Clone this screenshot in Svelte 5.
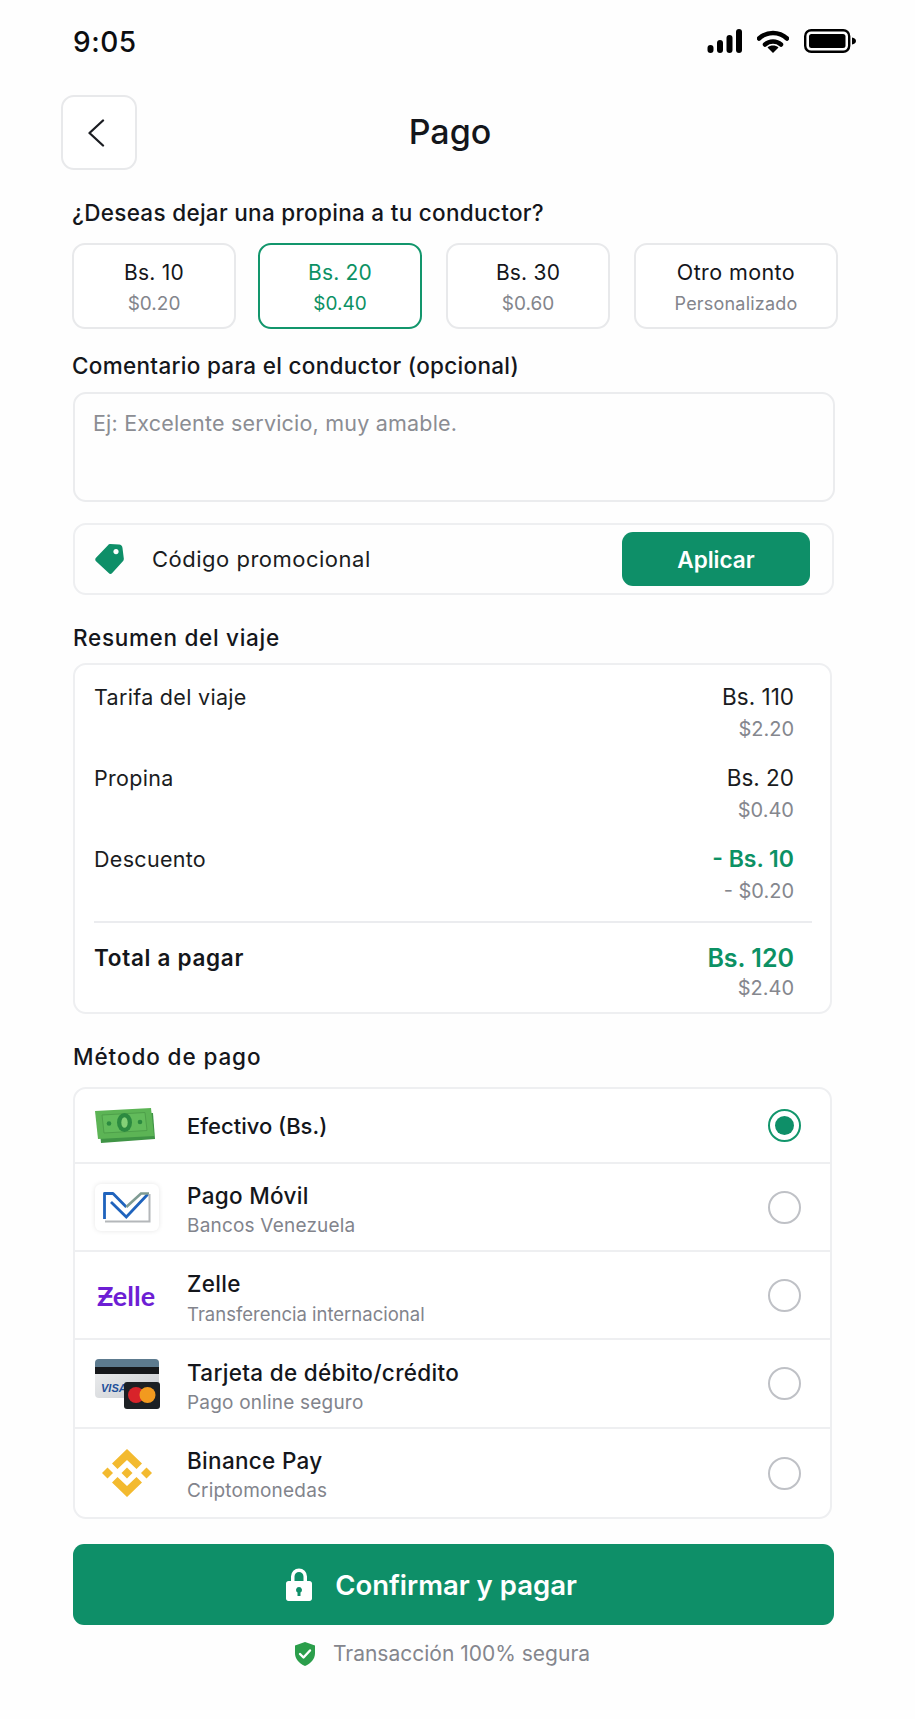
<script>
  const tips = [
    { main: 'Bs. 10', sub: '$0.20' },
    { main: 'Bs. 20', sub: '$0.40', active: true },
    { main: 'Bs. 30', sub: '$0.60' },
    { main: 'Otro monto', sub: 'Personalizado' }
  ];
  const summary = [
    { label: 'Tarifa del viaje', main: 'Bs. 110', sub: '$2.20' },
    { label: 'Propina', main: 'Bs. 20', sub: '$0.40' },
    { label: 'Descuento', main: '- Bs. 10', sub: '- $0.20', green: true }
  ];
</script>

<div class="page">
  <div class="status">
    <span class="time">9:05</span>
    <div class="status-icons">
      <svg width="35" height="24" viewBox="0 0 35 24"><rect x="0.5" y="16" width="6" height="8" rx="3"/><rect x="10" y="11" width="6" height="13" rx="3"/><rect x="19.500" y="6" width="6" height="18" rx="3"/><rect x="29" y="0" width="6" height="24" rx="3"/></svg>
      <svg width="32" height="23" viewBox="0 0 32 23"><path d="M2 8.500C10 1 22 1 30 8.500" fill="none" stroke="#000" stroke-width="4.500" stroke-linecap="round"/><path d="M8 14.500C12.500 10.500 19.500 10.500 24 14.500" fill="none" stroke="#000" stroke-width="4.500" stroke-linecap="round"/><path d="M16 23l-5.500-5.500c3-2.600 8-2.600 11 0z"/></svg>
      <svg width="52" height="24" viewBox="0 0 52 24"><rect x="1.200" y="1.200" width="44" height="21.600" rx="6" fill="none" stroke="#000" stroke-width="2.400"/><rect x="5" y="5" width="36.500" height="14" rx="2.500"/><path d="M48 8.500c2.500.5 4 1.800 4 3.500s-1.500 3-4 3.500z"/></svg>
    </div>
  </div>

  <header class="head">
    <button class="back" aria-label="Volver">
      <svg width="18" height="28" viewBox="0 0 18 28"><path d="M16 1.500L2.500 14 16 26.500" fill="none" stroke="#1b1d22" stroke-width="2.300" stroke-linecap="round" stroke-linejoin="round"/></svg>
    </button>
    <h1>Pago</h1>
  </header>

  <h2 class="q">¿Deseas dejar una propina a tu conductor?</h2>
  <div class="tips">
    {#each tips as t}
      <div class="tip" class:active={t.active}>
        <span class="tip-main">{t.main}</span>
        <span class="tip-sub">{t.sub}</span>
      </div>
    {/each}
  </div>

  <h2 class="c">Comentario para el conductor (opcional)</h2>
  <div class="area">Ej: Excelente servicio, muy amable.</div>

  <div class="promo">
    <svg class="tag" width="30" height="30" viewBox="0 0 30 30"><path fill-rule="evenodd" d="M13 1.200c.5-.7 1.200-1.100 2-1.100l9 .5c2 .1 3.300 1.400 3.500 3.300l1.300 10.600c.1 1.100-.2 2-.9 2.800L17.200 29c-1 1.200-2.500 1.200-3.500 0L1 17.300c-1-1.100-1-2.500 0-3.600zM21 5a2.600 2.600 0 1 0 .01 0z" fill="#0e8f68"/></svg>
    <span class="promo-text">Código promocional</span>
    <button class="apply">Aplicar</button>
  </div>

  <h2 class="r">Resumen del viaje</h2>
  <section class="card sum">
    {#each summary as s}
      <div class="sum-row">
        <span>{s.label}</span>
        <div class="vals">
          <span class="v" class:green={s.green}>{s.main}</span>
          <span class="vs">{s.sub}</span>
        </div>
      </div>
    {/each}
    <hr />
    <div class="sum-row total">
      <span class="t">Total a pagar</span>
      <div class="vals">
        <span class="v green big">Bs. 120</span>
        <span class="vs">$2.40</span>
      </div>
    </div>
  </section>

  <h2 class="m">Método de pago</h2>
  <section class="card pay">
    <div class="pay-row">
      <div class="logo">
        <svg width="60" height="37" viewBox="0 0 60 37">
          <path d="M3 8l55-2 2 26-54 4z" fill="#3f9445"/>
          <path d="M0 4l56-3 3 28-56 3z" fill="#5cb455"/>
          <path d="M7 8l43-2.500 2 18-43 2.500z" fill="#62bb5b" stroke="#4ea04a" stroke-width="1"/>
          <ellipse cx="29.500" cy="15.500" rx="7.500" ry="9.500" fill="#2c8a40"/>
          <ellipse cx="29.500" cy="15.500" rx="3.200" ry="5.300" fill="#84d077"/>
          <circle cx="14" cy="16.500" r="2.300" fill="#2c8a40"/>
          <circle cx="45" cy="15" r="2.300" fill="#2c8a40"/>
        </svg>
      </div>
      <div class="txt"><span class="pt e">Efectivo (Bs.)</span></div>
      <span class="radio on"></span>
    </div>
    <div class="pay-row">
      <div class="logo">
        <div class="pm">
          <svg width="48" height="31" viewBox="0 0 48 31">
            <path d="M1.500 27V1.500H10L23.300 15" fill="none" stroke="#1f63bd" stroke-width="2.800" stroke-linejoin="round"/>
            <path d="M8 10l15.300 15L45 2" fill="none" stroke="#1f63bd" stroke-width="2.800"/>
            <path d="M23.300 15L38 1.500h8" fill="none" stroke="#7f9b93" stroke-width="2.600"/>
            <path d="M46.500 2v27.500H2" fill="none" stroke="#b4b7ba" stroke-width="2"/>
          </svg>
        </div>
      </div>
      <div class="txt two"><span class="pt">Pago Móvil</span><span class="ps">Bancos Venezuela</span></div>
      <span class="radio"></span>
    </div>
    <div class="pay-row">
      <div class="logo"><span class="zelle">Ƶelle</span></div>
      <div class="txt two"><span class="pt">Zelle</span><span class="ps narrow">Transferencia internacional</span></div>
      <span class="radio"></span>
    </div>
    <div class="pay-row">
      <div class="logo">
        <svg width="65" height="50" viewBox="0 0 65 50">
          <defs><linearGradient id="cg" x1="0" y1="0" x2="1" y2="1"><stop offset="0" stop-color="#f0f1f2"/><stop offset="1" stop-color="#c9ccd0"/></linearGradient></defs>
          <rect x="0" y="0" width="64" height="39" rx="4" fill="url(#cg)"/>
          <path d="M0 8V4a4 4 0 0 1 4-4h56a4 4 0 0 1 4 4v4z" fill="#5d7b8f"/>
          <rect x="0" y="8" width="64" height="7" fill="#16181b"/>
          <text x="6" y="33" class="visa">VISA</text>
          <rect x="29" y="23" width="36" height="27" rx="3" fill="#1c2024"/>
          <circle cx="41" cy="36" r="8" fill="#d8232a"/>
          <circle cx="52.500" cy="36" r="8" fill="#f29a1f"/>
        </svg>
      </div>
      <div class="txt two three"><span class="pt">Tarjeta de débito/crédito</span><span class="ps">Pago online seguro</span></div>
      <span class="radio"></span>
    </div>
    <div class="pay-row">
      <div class="logo">
        <svg class="bn" width="50" height="48" viewBox="0 0 50 48" fill="#f3ba2f">
          <path d="M25 0l15 14.500-5.500 5.500L25 11l-9.500 9L10 14.500z"/>
          <path d="M25 48L10 33.500l5.500-5.500 9.500 9 9.500-9 5.500 5.500z"/>
          <path d="M5.500 18.500L11 24l-5.500 5.500L0 24z"/>
          <path d="M44.500 18.500L50 24l-5.500 5.500L39 24z"/>
          <path d="M25 18.500l5.500 5.500-5.500 5.500-5.500-5.500z"/>
        </svg>
      </div>
      <div class="txt two four"><span class="pt">Binance Pay</span><span class="ps">Criptomonedas</span></div>
      <span class="radio"></span>
    </div>
  </section>

  <button class="confirm">
    <svg width="26" height="33" viewBox="0 0 26 33"><path fill-rule="evenodd" d="M5 13V8.500a8 8 0 0 1 16 0V13h2.500c1.400 0 2.500 1.100 2.500 2.500v15c0 1.400-1.100 2.500-2.500 2.500h-21C1.100 33 0 31.900 0 30.500v-15C0 14.100 1.100 13 2.500 13zm3.500 0h9V8.500a4.500 4.500 0 0 0-9 0zM13 19a3 3 0 0 0-1.500 5.600V28h3v-3.400A3 3 0 0 0 13 19z" fill="#fff"/></svg>
    <span>Confirmar y pagar</span>
  </button>

  <div class="secure">
    <svg width="20" height="24" viewBox="0 0 20 24"><path d="M10 0l10 3.500V11c0 6-4 10.500-10 13C4 21.500 0 17 0 11V3.500z" fill="#2b9e4b"/><path d="M5 12l3.500 3.500L15 8.500" fill="none" stroke="#fff" stroke-width="2.400" stroke-linecap="round" stroke-linejoin="round"/></svg>
    <span>Transacción 100% segura</span>
  </div>
</div>

<style>
  :global(body) { margin: 0; background: #fefefe; }
  .page {
    width: 915px;
    height: 1719px;
    box-sizing: border-box;
    padding-left: 72px;
    font-family: Inter, "Liberation Sans", sans-serif;
    color: #14161b;
    background: #fefefe;
    overflow: hidden;
  }
  h1, h2 { margin: 0; font-weight: 500; }
  h2 { font-size: 22.500px; line-height: 30px; letter-spacing: 0.3px; }

  .status { height: 95px; display: flex; align-items: flex-start; justify-content: space-between; width: 784px; position: relative; }
  .time { font-size: 28px; font-weight: 500; line-height: 34px; margin: 25px 0 0 1px; letter-spacing: 0.5px; color: #0c0d10; }
  .status-icons { display: flex; align-items: center; gap: 15px; margin-top: 29px; }

  .head { height: 75px; position: relative; display: flex; align-items: center; justify-content: center; width: 756px; }
  .back {
    position: absolute; left: -11px; top: 0;
    width: 76px; height: 75px; box-sizing: border-box;
    background: #fff; border: 2px solid #e8e9eb; border-radius: 13px;
    display: flex; align-items: center; justify-content: center; padding: 0 6px 0 0;
  }
  h1 { font-size: 34px; line-height: 40px; letter-spacing: 0; margin-top: -1px; }

  .q { margin-top: 28px; }
  .tips { display: flex; margin-top: 15px; }
  .tip {
    width: 164px; flex: none; height: 86px; box-sizing: border-box;
    border: 2px solid #e8e9eb; border-radius: 13px; background: #fff;
    display: flex; flex-direction: column; align-items: center; padding-top: 14px;
  }
  .tip:nth-child(2) { margin-left: 22px; }
  .tip:nth-child(3) { margin-left: 24px; }
  .tip:nth-child(4) { margin-left: 24px; width: 204px; }
  .tip.active { border-color: #12966c; color: #0c9164; }
  .tip-main { font-size: 21px; line-height: 28px; letter-spacing: 0.2px; }
  .tip-sub { font-size: 19px; line-height: 28px; margin-top: 3px; color: #83858c; }
  .tip:last-child .tip-main { font-size: 21.500px; letter-spacing: 0.4px; margin-top: -1px; }
  .tip:last-child .tip-sub { font-size: 18px; letter-spacing: 0.2px; margin-top: 4px; }
  .tip.active .tip-sub { color: #0c9164; }

  .c { margin-top: 22px; }
  .area {
    margin-top: 11px; margin-left: 1px; width: 762px; height: 110px; box-sizing: border-box;
    border: 2px solid #ebecee; border-radius: 13px; padding: 15px 18px;
    font-size: 21.500px; line-height: 28px; letter-spacing: 0.2px; color: #8b8d93;
  }
  .promo {
    margin-top: 21px; margin-left: 1px; width: 761px; height: 72px; box-sizing: border-box;
    border: 2px solid #eeeff1; border-radius: 13px;
    display: flex; align-items: center; padding: 0 22px 0 20px;
  }
  .tag { flex: none; }
  .promo-text { margin-left: 27px; font-size: 22px; letter-spacing: 0.5px; color: #1a1c21; flex: 1; }
  .apply {
    width: 188px; height: 54px; border: 0; border-radius: 11px; background: #0e8f68; color: #fff;
    font: 600 22.500px Inter, "Liberation Sans", sans-serif; padding: 0;
  }

  .r { margin-top: 28px; margin-left: 1px; letter-spacing: 0.7px; }
  .card { margin-left: 1px; width: 759px; box-sizing: border-box; border: 2px solid #eeeff1; border-radius: 13px; background: #fff; }
  .sum { margin-top: 10px; height: 351px; padding: 16px 18px 0 19px; }
  .sum-row { display: flex; justify-content: space-between; margin-right: 18px; margin-bottom: 17px; font-size: 21.500px; letter-spacing: 0.3px; line-height: 32px; color: #1a1c21; }
  .sum-row:nth-child(3) { margin-bottom: 14px; }
  .vals { display: flex; flex-direction: column; align-items: flex-end; }
  .v { font-size: 22.500px; letter-spacing: 0; }
  .vs { font-size: 20px; letter-spacing: 0; line-height: 32px; color: #85878e; }
  .green { color: #0c9164; font-weight: 600; }
  .sum-row .green { font-size: 23px; }
  hr { border: 0; height: 2px; background: #ebecef; margin: 0 0 19px; }
  .total { margin-bottom: 0; }
  .total .vs { line-height: 28px; }
  .t { font-weight: 600; font-size: 22.500px; letter-spacing: 0.7px; color: #14161b; }
  .sum-row .big { font-size: 25px; font-weight: 600; line-height: 32px; }

  .m { margin-top: 28px; margin-left: 1px; letter-spacing: 0.9px; }
  .pay {
    margin-top: 15px; height: 432px;
    display: grid; grid-template-rows: 75px 88px 88px 89px 88px;
  }
  .pay-row { display: flex; align-items: center; padding: 0 29px 0 20px; border-bottom: 2px solid #eeeff1; box-sizing: border-box; }
  .pay-row:last-child { border-bottom: 0; }
  .logo { width: 92px; flex: none; display: flex; justify-content: flex-start; align-items: center; }
  .pm { width: 64px; height: 47px; border-radius: 6px; box-shadow: 0 0 5px rgba(0,0,0,.1); display: flex; align-items: center; justify-content: center; background: #fff; }
  .zelle { font: 700 27px Lato, "DejaVu Sans", sans-serif; color: #6d1ed4; margin-left: 2px; }
  .visa { font: italic 800 11px "Liberation Sans", sans-serif; fill: #1d4f9a; }
  .bn { margin-left: 7px; }
  .txt { flex: 1; display: flex; flex-direction: column; }
  .two { margin-top: 7px; }
  .three { margin-top: 9px; }
  .four { margin-top: 6px; }
  .pt { font-size: 22.500px; letter-spacing: 0.3px; line-height: 30px; font-weight: 500; color: #14161b; }
  .pt.e { font-size: 22px; letter-spacing: 0; }
  .ps { font-size: 19px; letter-spacing: 0.2px; line-height: 30px; color: #82848c; }
  .ps.narrow { font-size: 18.500px; letter-spacing: 0; }
  .radio { width: 33px; height: 33px; box-sizing: border-box; border-radius: 50%; border: 2px solid #bfc1c6; display: flex; align-items: center; justify-content: center; }
  .radio.on { border-color: #12966c; }
  .radio.on::after { content: ""; width: 19px; height: 19px; border-radius: 50%; background: #0e8f68; }

  .confirm {
    margin-top: 25px; margin-left: 1px; width: 761px; height: 81px; border: 0; border-radius: 11px;
    background: #0e8f68; color: #fff; display: flex; align-items: center; justify-content: center; gap: 23px;
    font: 600 27.500px Inter, "Liberation Sans", sans-serif; padding: 0 44px 0 0;
  }
  .secure { margin-top: 16px; margin-left: 1px; width: 761px; box-sizing: border-box; padding-right: 22px; display: flex; align-items: center; justify-content: center; gap: 18px; font-size: 21px; line-height: 26px; color: #84868d; }
</style>
